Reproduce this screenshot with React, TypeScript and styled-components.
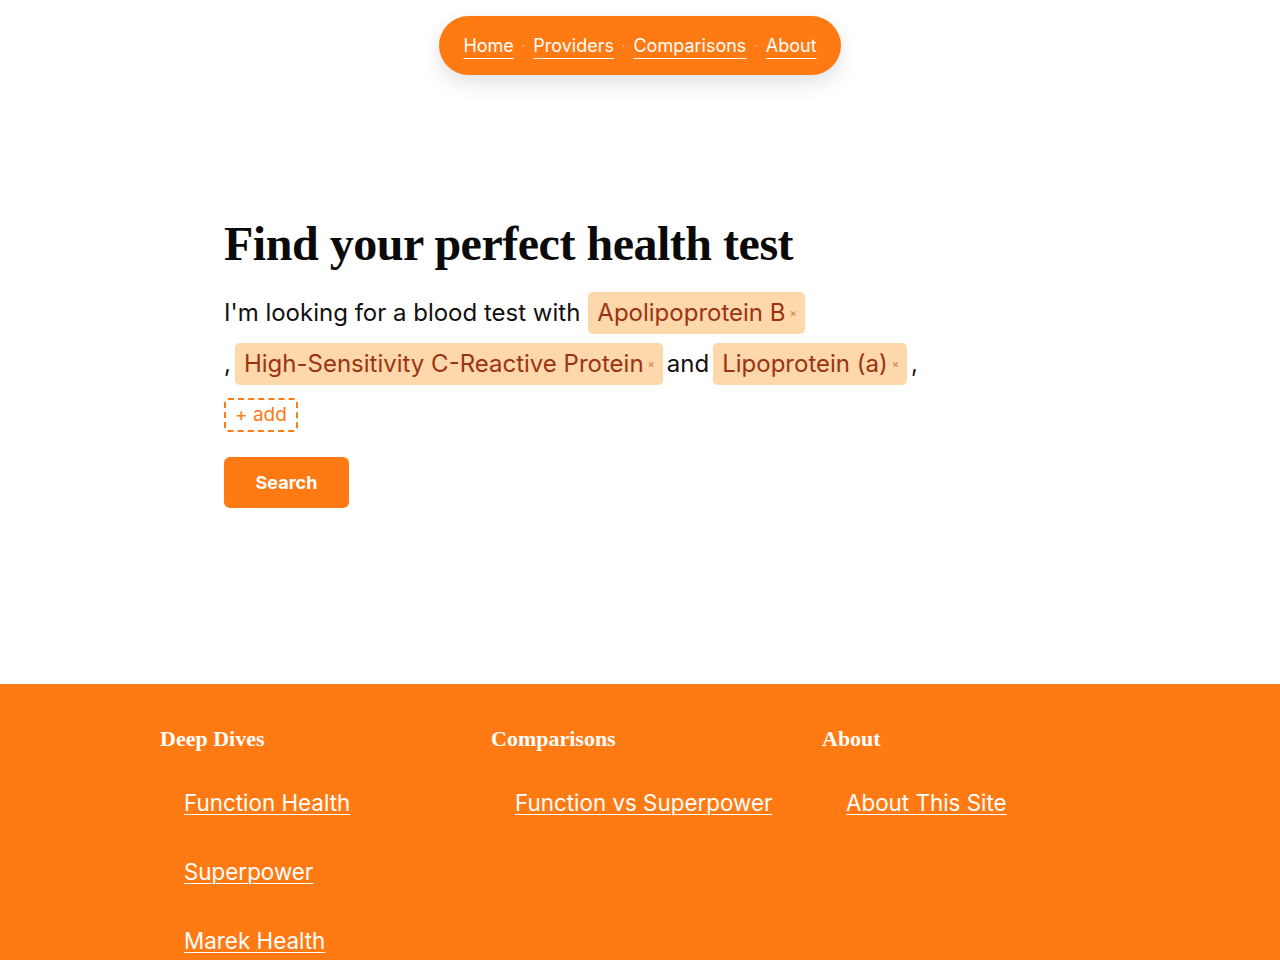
import React from 'react';
import styled, { createGlobalStyle } from 'styled-components';

const GlobalStyle = createGlobalStyle`
  html, body {
    margin: 0;
    padding: 0;
    background: #ffffff;
    font-family: Inter, "Liberation Sans", sans-serif;
    color: #111111;
  }
  * { box-sizing: border-box; }
`;

const ORANGE = '#ff7a12';

const Page = styled.div`
  min-height: 960px;
  display: flex;
  flex-direction: column;
`;

/* 상단 pill 네비 */
const NavWrap = styled.div`
  display: flex;
  justify-content: center;
  padding-top: 16px;
`;

const NavPill = styled.nav`
  display: flex;
  align-items: center;
  height: 59px;
  padding: 0 24px;
  background: ${ORANGE};
  border-radius: 999px;
  box-shadow: 0 8px 20px rgba(0, 0, 0, 0.12);
`;

const NavLink = styled.a`
  color: #ffffff;
  font-size: 18px;
  text-decoration: underline;
  text-underline-offset: 6px;
  text-decoration-thickness: 1px;
`;

const NavDot = styled.span`
  color: rgba(255, 255, 255, 0.55);
  font-size: 12px;
  margin: 0 8px;
`;

/* 검색 히어로 */
const Hero = styled.main`
  width: 832px;
  margin: 0 auto;
  padding: 140px 0 176px;
`;

const Title = styled.h1`
  font-family: "Liberation Serif", "DejaVu Serif", serif;
  font-size: 48px;
  font-weight: 700;
  letter-spacing: -0.01em;
  color: #0a0a0a;
  margin: 0 0 19px;
  line-height: 1.2;
`;

const Sentence = styled.div`
  display: flex;
  flex-wrap: wrap;
  align-items: center;
  column-gap: 4px;
  row-gap: 9px;
  max-width: 740px;
  font-size: 24px;
  line-height: 28px;
`;

const Group = styled.span`
  display: inline-flex;
  align-items: center;
  gap: 4px;
`;

const Plain = styled.span<{ $lead?: boolean }>`
  color: #111111;
  margin-right: ${p => (p.$lead ? '4px' : '0')};
`;

const Chip = styled.span`
  display: inline-flex;
  align-items: center;
  height: 42px;
  padding: 0 8px 0 9px;
  background: #fed7aa;
  color: #9a3412;
  border-radius: 5px;
`;

const ChipX = styled.span`
  font-size: 11px;
  color: #b45a3c;
  opacity: 0.75;
  margin-left: 4px;
`;

const AddRow = styled.span`
  display: flex;
  align-items: center;
  height: 42px;
`;

const AddButton = styled.button`
  height: 34px;
  padding: 0 9px;
  background: transparent;
  border: 2px dashed ${ORANGE};
  border-radius: 4px;
  color: ${ORANGE};
  font-family: Inter, "Liberation Sans", sans-serif;
  font-size: 19px;
`;

const SearchButton = styled.button`
  margin-top: 21px;
  width: 125px;
  height: 51px;
  border: none;
  border-radius: 6px;
  background: ${ORANGE};
  color: #ffffff;
  font-family: Inter, "Liberation Sans", sans-serif;
  font-size: 18px;
  font-weight: 700;
`;

/* 푸터 */
const Footer = styled.footer`
  flex: 1;
  background: ${ORANGE};
  padding: 40px 0 0 160px;
  display: grid;
  grid-template-columns: repeat(3, 331px);
  align-items: start;
`;

const FooterHeading = styled.h3`
  font-family: "Liberation Serif", "DejaVu Serif", serif;
  font-size: 22px;
  font-weight: 700;
  color: #ffffff;
  margin: 0;
  line-height: 30px;
`;

const FooterList = styled.ul`
  list-style: none;
  margin: 36px 0 0;
  padding: 0 0 0 24px;
  display: flex;
  flex-direction: column;
  gap: 43px;
`;

const FooterLink = styled.a`
  color: #ffffff;
  font-size: 22.4px;
  line-height: 26px;
  text-decoration: underline;
  text-underline-offset: 3px;
  text-decoration-thickness: 1px;
`;

const NAV = ['Home', 'Providers', 'Comparisons', 'About'];

const FOOTER_COLS = [
  { title: 'Deep Dives', links: ['Function Health', 'Superpower', 'Marek Health'] },
  { title: 'Comparisons', links: ['Function vs Superpower'] },
  { title: 'About', links: ['About This Site'] },
];

const TESTS = ['Apolipoprotein B', 'High-Sensitivity C-Reactive Protein', 'Lipoprotein (a)'];

export default function App() {
  return (
    <Page>
      <GlobalStyle />
      <NavWrap>
        <NavPill>
          {NAV.map((n, i) => (
            <React.Fragment key={n}>
              {i > 0 && <NavDot>·</NavDot>}
              <NavLink href="#">{n}</NavLink>
            </React.Fragment>
          ))}
        </NavPill>
      </NavWrap>

      <Hero>
        <Title>Find your perfect health test</Title>
        <Sentence>
          <Plain $lead>I'm looking for a blood test with</Plain>
          {TESTS.map((t, i) => (
            <Group key={t}>
              {i > 0 && <Plain>{i === TESTS.length - 1 ? 'and' : ','}</Plain>}
              <Chip>{t}<ChipX>×</ChipX></Chip>
            </Group>
          ))}
          <Plain>,</Plain>
          <AddRow>
            <AddButton>+ add</AddButton>
          </AddRow>
        </Sentence>
        <SearchButton>Search</SearchButton>
      </Hero>

      <Footer>
        {FOOTER_COLS.map(col => (
          <div key={col.title}>
            <FooterHeading>{col.title}</FooterHeading>
            <FooterList>
              {col.links.map(l => (
                <li key={l}>
                  <FooterLink href="#">{l}</FooterLink>
                </li>
              ))}
            </FooterList>
          </div>
        ))}
      </Footer>
    </Page>
  );
}
